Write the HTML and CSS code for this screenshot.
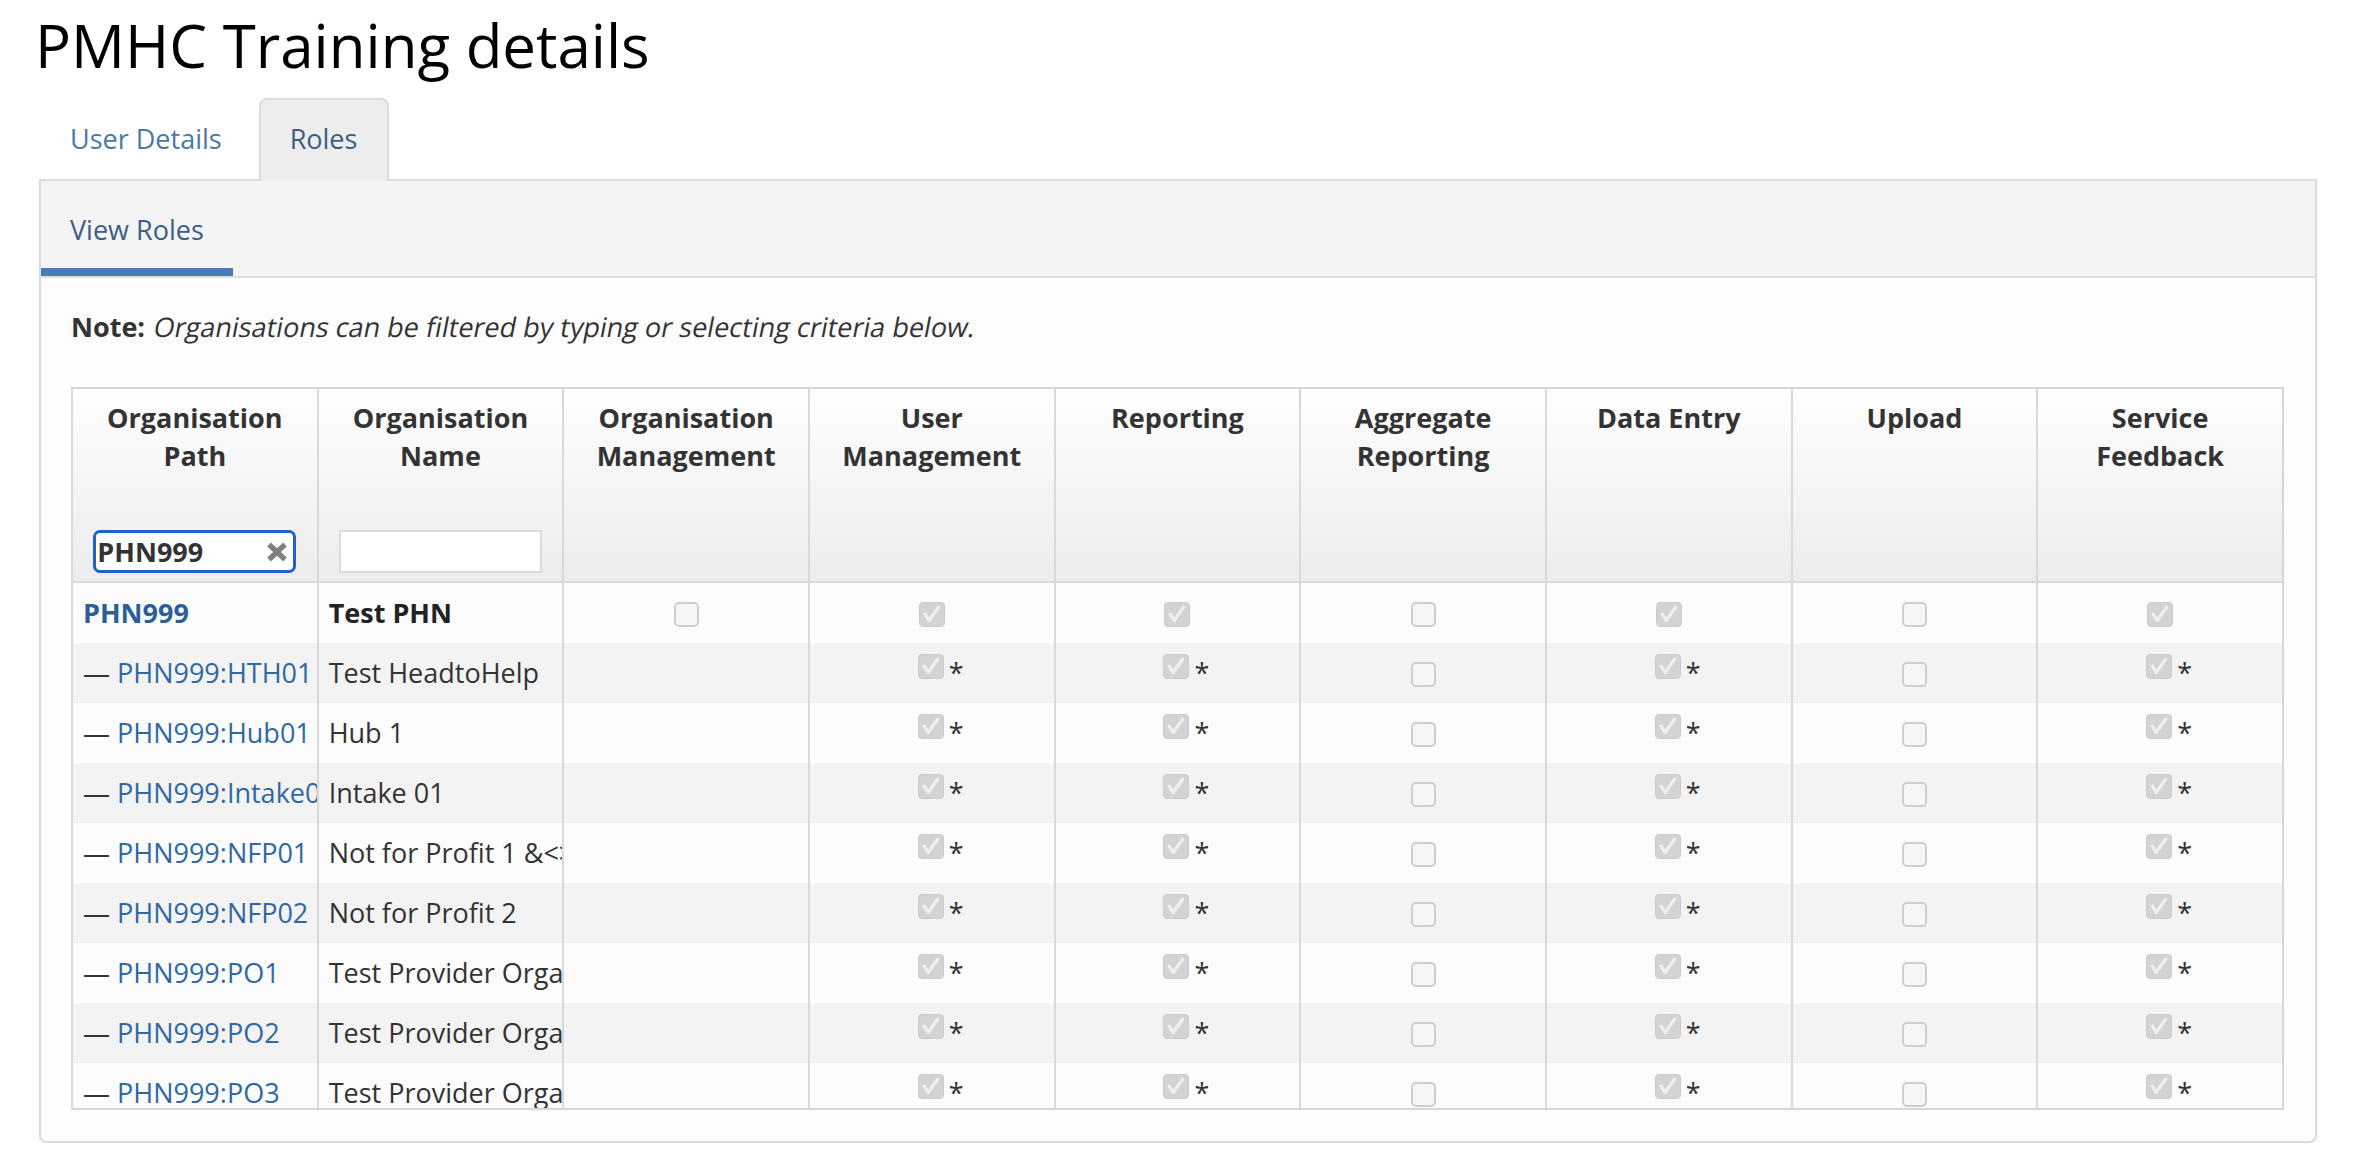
FILE: index.html
```html
<!DOCTYPE html>
<html lang="en">
<head>
<meta charset="utf-8">
<title>PMHC Training details</title>
<link rel="stylesheet" href="styles.css">
</head>
<body>
<svg class="defs" aria-hidden="true">
  <symbol id="chk" viewBox="0 0 26 25">
    <path d="M5.6 12.2 L9.9 19 L20.2 4.6" fill="none" stroke="#efefef" stroke-width="3.6" stroke-linecap="round" stroke-linejoin="round"/>
  </symbol>
</svg>
<main class="page">
  <h1 class="title">PMHC Training details</h1>
  <nav class="tabs">
    <a class="tab">User Details</a>
    <a class="tab active">Roles</a>
  </nav>
  <section class="panel">
    <div class="panel-head">
      <a class="subtab">View Roles</a>
    </div>
    <div class="panel-body">
      <p class="note"><b>Note:</b> <i class="note-i">Organisations can be filtered by typing or selecting criteria below.</i></p>
      <div class="grid">
        <table class="grid-table">
          <colgroup><col><col><col><col><col><col><col><col><col></colgroup>
          <thead>
            <tr>
              <th><div class="th-in"><span class="th-label">Organisation Path</span><span class="filter focus"><input type="text" value="PHN999"><svg class="clear" viewBox="0 0 22 20"><path d="M3 2.5 L19 17.5 M19 2.5 L3 17.5" stroke="#808080" stroke-width="5.2"/></svg></span></div></th>
              <th><div class="th-in"><span class="th-label">Organisation Name</span><span class="filter"><input type="text" value=""></span></div></th>
              <th><div class="th-in"><span class="th-label">Organisation Management</span></div></th>
              <th><div class="th-in"><span class="th-label">User Management</span></div></th>
              <th><div class="th-in"><span class="th-label">Reporting</span></div></th>
              <th><div class="th-in"><span class="th-label">Aggregate Reporting</span></div></th>
              <th><div class="th-in"><span class="th-label">Data Entry</span></div></th>
              <th><div class="th-in"><span class="th-label">Upload</span></div></th>
              <th><div class="th-in"><span class="th-label">Service Feedback</span></div></th>
            </tr>
          </thead>
        </table>
        <div class="grid-scroll">
          <table class="grid-table body">
            <colgroup><col><col><col><col><col><col><col><col><col></colgroup>
            <tbody>
              <tr>
                <td class="txt"><a class="link strong">PHN999</a></td>
                <td class="txt"><b class="name-root">Test PHN</b></td>
                <td class="c"><span class="cb off"></span></td>
                <td class="c"><span class="cb on"><svg><use href="#chk"/></svg></span></td>
                <td class="c"><span class="cb on"><svg><use href="#chk"/></svg></span></td>
                <td class="c"><span class="cb off"></span></td>
                <td class="c"><span class="cb on"><svg><use href="#chk"/></svg></span></td>
                <td class="c"><span class="cb off"></span></td>
                <td class="c"><span class="cb on"><svg><use href="#chk"/></svg></span></td>
              </tr>
              <tr>
                <td class="txt">— <a class="link">PHN999:HTH01</a></td>
                <td class="txt">Test HeadtoHelp</td>
                <td class="c"></td>
                <td class="c"><span class="mark"><span class="cb on"><svg><use href="#chk"/></svg></span><span class="star">*</span></span></td>
                <td class="c"><span class="mark"><span class="cb on"><svg><use href="#chk"/></svg></span><span class="star">*</span></span></td>
                <td class="c"><span class="cb off"></span></td>
                <td class="c"><span class="mark"><span class="cb on"><svg><use href="#chk"/></svg></span><span class="star">*</span></span></td>
                <td class="c"><span class="cb off"></span></td>
                <td class="c"><span class="mark"><span class="cb on"><svg><use href="#chk"/></svg></span><span class="star">*</span></span></td>
              </tr>
              <tr>
                <td class="txt">— <a class="link">PHN999:Hub01</a></td>
                <td class="txt">Hub 1</td>
                <td class="c"></td>
                <td class="c"><span class="mark"><span class="cb on"><svg><use href="#chk"/></svg></span><span class="star">*</span></span></td>
                <td class="c"><span class="mark"><span class="cb on"><svg><use href="#chk"/></svg></span><span class="star">*</span></span></td>
                <td class="c"><span class="cb off"></span></td>
                <td class="c"><span class="mark"><span class="cb on"><svg><use href="#chk"/></svg></span><span class="star">*</span></span></td>
                <td class="c"><span class="cb off"></span></td>
                <td class="c"><span class="mark"><span class="cb on"><svg><use href="#chk"/></svg></span><span class="star">*</span></span></td>
              </tr>
              <tr>
                <td class="txt">— <a class="link">PHN999:Intake01</a></td>
                <td class="txt">Intake 01</td>
                <td class="c"></td>
                <td class="c"><span class="mark"><span class="cb on"><svg><use href="#chk"/></svg></span><span class="star">*</span></span></td>
                <td class="c"><span class="mark"><span class="cb on"><svg><use href="#chk"/></svg></span><span class="star">*</span></span></td>
                <td class="c"><span class="cb off"></span></td>
                <td class="c"><span class="mark"><span class="cb on"><svg><use href="#chk"/></svg></span><span class="star">*</span></span></td>
                <td class="c"><span class="cb off"></span></td>
                <td class="c"><span class="mark"><span class="cb on"><svg><use href="#chk"/></svg></span><span class="star">*</span></span></td>
              </tr>
              <tr>
                <td class="txt">— <a class="link">PHN999:NFP01</a></td>
                <td class="txt">Not for Profit 1 &amp;&lt;&gt;"'</td>
                <td class="c"></td>
                <td class="c"><span class="mark"><span class="cb on"><svg><use href="#chk"/></svg></span><span class="star">*</span></span></td>
                <td class="c"><span class="mark"><span class="cb on"><svg><use href="#chk"/></svg></span><span class="star">*</span></span></td>
                <td class="c"><span class="cb off"></span></td>
                <td class="c"><span class="mark"><span class="cb on"><svg><use href="#chk"/></svg></span><span class="star">*</span></span></td>
                <td class="c"><span class="cb off"></span></td>
                <td class="c"><span class="mark"><span class="cb on"><svg><use href="#chk"/></svg></span><span class="star">*</span></span></td>
              </tr>
              <tr>
                <td class="txt">— <a class="link">PHN999:NFP02</a></td>
                <td class="txt">Not for Profit 2</td>
                <td class="c"></td>
                <td class="c"><span class="mark"><span class="cb on"><svg><use href="#chk"/></svg></span><span class="star">*</span></span></td>
                <td class="c"><span class="mark"><span class="cb on"><svg><use href="#chk"/></svg></span><span class="star">*</span></span></td>
                <td class="c"><span class="cb off"></span></td>
                <td class="c"><span class="mark"><span class="cb on"><svg><use href="#chk"/></svg></span><span class="star">*</span></span></td>
                <td class="c"><span class="cb off"></span></td>
                <td class="c"><span class="mark"><span class="cb on"><svg><use href="#chk"/></svg></span><span class="star">*</span></span></td>
              </tr>
              <tr>
                <td class="txt">— <a class="link">PHN999:PO1</a></td>
                <td class="txt">Test Provider Organisation 1</td>
                <td class="c"></td>
                <td class="c"><span class="mark"><span class="cb on"><svg><use href="#chk"/></svg></span><span class="star">*</span></span></td>
                <td class="c"><span class="mark"><span class="cb on"><svg><use href="#chk"/></svg></span><span class="star">*</span></span></td>
                <td class="c"><span class="cb off"></span></td>
                <td class="c"><span class="mark"><span class="cb on"><svg><use href="#chk"/></svg></span><span class="star">*</span></span></td>
                <td class="c"><span class="cb off"></span></td>
                <td class="c"><span class="mark"><span class="cb on"><svg><use href="#chk"/></svg></span><span class="star">*</span></span></td>
              </tr>
              <tr>
                <td class="txt">— <a class="link">PHN999:PO2</a></td>
                <td class="txt">Test Provider Organisation 2</td>
                <td class="c"></td>
                <td class="c"><span class="mark"><span class="cb on"><svg><use href="#chk"/></svg></span><span class="star">*</span></span></td>
                <td class="c"><span class="mark"><span class="cb on"><svg><use href="#chk"/></svg></span><span class="star">*</span></span></td>
                <td class="c"><span class="cb off"></span></td>
                <td class="c"><span class="mark"><span class="cb on"><svg><use href="#chk"/></svg></span><span class="star">*</span></span></td>
                <td class="c"><span class="cb off"></span></td>
                <td class="c"><span class="mark"><span class="cb on"><svg><use href="#chk"/></svg></span><span class="star">*</span></span></td>
              </tr>
              <tr>
                <td class="txt">— <a class="link">PHN999:PO3</a></td>
                <td class="txt">Test Provider Organisation 3</td>
                <td class="c"></td>
                <td class="c"><span class="mark"><span class="cb on"><svg><use href="#chk"/></svg></span><span class="star">*</span></span></td>
                <td class="c"><span class="mark"><span class="cb on"><svg><use href="#chk"/></svg></span><span class="star">*</span></span></td>
                <td class="c"><span class="cb off"></span></td>
                <td class="c"><span class="mark"><span class="cb on"><svg><use href="#chk"/></svg></span><span class="star">*</span></span></td>
                <td class="c"><span class="cb off"></span></td>
                <td class="c"><span class="mark"><span class="cb on"><svg><use href="#chk"/></svg></span><span class="star">*</span></span></td>
              </tr>
            </tbody>
          </table>
        </div>
      </div>
    </div>
  </section>
</main>
</body>
</html>
```

FILE: styles.css
```css
* { box-sizing: border-box; }

html, body {
  margin: 0;
  background: #fff;
}

body {
  font-family: "Open Sans", "Liberation Sans", sans-serif;
  font-size: 27px;
  line-height: 38px;
  color: #333;
}

.defs {
  position: absolute;
  width: 0;
  height: 0;
  overflow: hidden;
}

.page {
  padding: 0 45px 0 39px;
}

.title {
  margin: 12px 0 0 -4px;
  font-size: 60px;
  line-height: 66px;
  font-weight: 400;
  color: #000;
}

/* top tabs */
.tabs {
  display: flex;
  align-items: flex-end;
  margin-top: 20px;
  height: 81px;
}

.tab {
  position: relative;
  z-index: 1;
  display: block;
  margin-right: 6px;
  margin-bottom: -2px;
  padding: 20px 29px 23px;
  font-size: 27px;
  line-height: 38px;
  color: #4a78ab;
  border: 2px solid transparent;
  border-bottom: 0;
  border-radius: 8px 8px 0 0;
}

.tab.active {
  padding-right: 30px;
  background: #ededed;
  border-color: #dcdcdc;
  color: #3c5e86;
}

/* panel */
.panel {
  border: 2px solid #dcdcdc;
  border-radius: 0 0 8px 8px;
  background: #fdfdfd;
  box-shadow: 0 1px 3px rgba(0, 0, 0, 0.08);
}

.panel-head {
  display: flex;
  background: #f4f4f4;
  border-bottom: 2px solid #dddddd;
}

.subtab {
  display: block;
  padding: 30px 29px 19px;
  line-height: 38px;
  color: #3c5e86;
  border-bottom: 8px solid #4a7bb3;
}

.panel-body {
  padding: 30px 31px 31px 30px;
}

.note {
  margin: 0 0 41px;
  color: #333;
}

.note b { font-weight: 700; }

.note-i {
  display: inline-block;
  font-style: normal;
  transform: skewX(-11deg);
  transform-origin: 0 80%;
}

/* grid */
.grid {
  border: 2px solid #d6d6d6;
  border-left: 0;
}

.grid-table {
  width: 100%;
  table-layout: fixed;
  border-collapse: separate;
  border-spacing: 0;
}

.grid-table col { width: 11.111%; }

.grid-table th,
.grid-table td {
  border-left: 2px solid #d9d9d9;
  padding: 0;
}

.grid-table thead th {
  background: linear-gradient(#fefefe, #ececec);
  border-bottom: 2px solid #d9d9d9;
  vertical-align: top;
  font-weight: 700;
  color: #333;
}

.th-in {
  height: 192px;
  display: flex;
  flex-direction: column;
  align-items: center;
  padding: 10px 12px 8px;
  text-align: center;
}

.th-label {
  display: block;
}

.filter {
  position: relative;
  display: block;
  margin-top: auto;
  width: 203px;
  height: 43px;
}

.filter input {
  display: block;
  width: 100%;
  height: 100%;
  margin: 0;
  padding: 0 2px;
  border: 2px solid #dcdcdc;
  background: #fff;
  font: 700 27px/38px "Open Sans", "Liberation Sans", sans-serif;
  color: #333;
  outline: none;
}

.filter.focus input {
  border: 3px solid #1f62c9;
  border-radius: 7px;
  padding-left: 1px;
}

.clear {
  position: absolute;
  right: 8px;
  top: 12px;
  width: 22px;
  height: 20px;
}

.grid-scroll {
  height: 525px;
  overflow: hidden;
}

.grid-table.body tr { height: 60px; }
.grid-table.body tr:nth-child(odd) { background: #fcfcfc; }
.grid-table.body tr:nth-child(even) { background: #f3f3f3; }

.grid-table td {
  vertical-align: middle;
}

.txt {
  padding: 0 10px !important;
  white-space: nowrap;
  overflow: hidden;
  color: #333;
}

.link {
  color: #3068a3;
  text-decoration: none;
}

.link.strong {
  font-weight: 700;
  color: #2c5f98;
}

.name-root {
  font-weight: 700;
  color: #222;
}

.c {
  text-align: center;
  line-height: 0;
}

.cb {
  display: inline-block;
  vertical-align: middle;
  width: 26px;
  height: 25px;
  border-radius: 5px;
  margin-top: 2px;
}

.cb.off {
  width: 25px;
  background: #f6f6f6;
  border: 2px solid #cecece;
}

.cb.on {
  background: #d3d3d3;
  border: 1px solid #cbcbcb;
  border-radius: 4px;
}

.cb.on svg {
  display: block;
  width: 24px;
  height: 23px;
}

.mark {
  position: relative;
  display: inline-block;
  height: 38px;
  line-height: 38px;
  vertical-align: middle;
  margin-left: -2px;
}

.mark .cb {
  vertical-align: top;
  margin-top: 0;
}

.star {
  position: absolute;
  left: 100%;
  top: 0;
  margin-left: 5px;
  font-size: 27px;
  line-height: 38px;
  color: #333;
}
```
